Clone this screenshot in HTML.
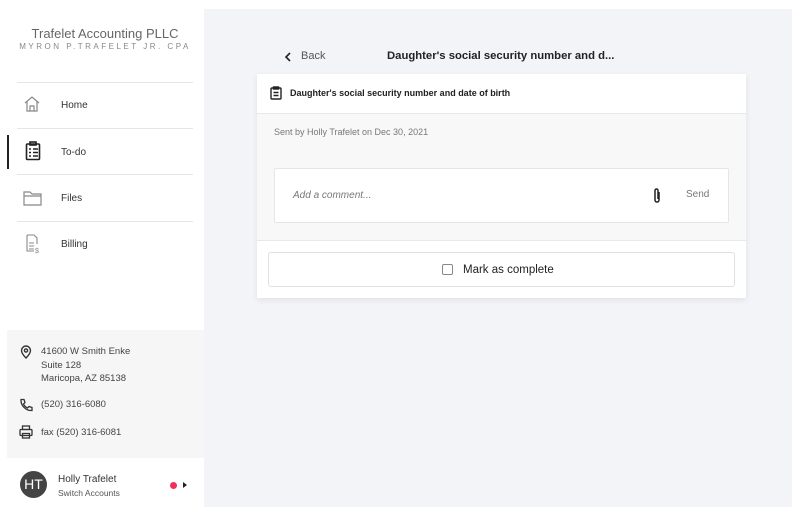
<!DOCTYPE html>
<html><head><meta charset="utf-8"><style>
*{margin:0;padding:0;box-sizing:border-box}
body{width:800px;height:516px;background:#fff;font-family:"Liberation Sans",sans-serif;position:relative;overflow:hidden;color:#222}
.main{position:absolute;left:204px;top:9px;width:588px;height:498px;background:#f3f4f7}
.side{position:absolute;left:0;top:0;width:204px;height:516px;background:#fff}
.t1{position:absolute;left:0;width:210px;top:26px;text-align:center;font-size:13px;color:#666}
.t2{position:absolute;left:0;width:210px;top:42px;text-align:center;font-size:8px;letter-spacing:2.5px;color:#888}
.hr{position:absolute;left:17px;width:176px;height:1px;background:#e5e5e5}
.nav{position:absolute;left:61px;font-size:10px;color:#333}
.ic{position:absolute;left:22px}
.info{position:absolute;left:7px;top:330px;width:197px;height:128px;background:#f6f6f7;font-size:9.5px;color:#444}
.info div{position:absolute;left:34px;line-height:13.5px}
.card{position:absolute;left:257px;top:74px;width:489px;height:224px;background:#fff;box-shadow:0 2px 6px rgba(0,0,0,.08)}
</style></head><body>
<div class="main"></div>
<div class="side">
<div class="t1">Trafelet Accounting PLLC</div>
<div class="t2">MYRON P.TRAFELET JR. CPA</div>
<div class="hr" style="top:82px"></div>
<div class="hr" style="top:128px"></div>
<div class="hr" style="top:174px"></div>
<div class="hr" style="top:221px"></div>
<svg class="ic" style="top:94px" width="20" height="20" viewBox="0 0 20 20" fill="none" stroke="#888" stroke-width="1.2"><path d="M3 9L10 3l7 6M5 8v9h10V8M8 17v-5h4v5"/></svg>
<div class="nav" style="top:100px">Home</div>
<div style="position:absolute;left:7px;top:135px;width:2px;height:34px;background:#222"></div>
<svg class="ic" style="top:141px;left:25px" width="16" height="20" viewBox="0 0 16 20" fill="none" stroke="#222" stroke-width="1.6"><rect x="1.5" y="3" width="13" height="15.5" rx="1"/><rect x="5" y="1" width="6" height="3"/><path d="M4 8h2M8 8h5M4 11.5h2M8 11.5h5M4 15h2M8 15h5"/></svg>
<div class="nav" style="top:147px">To-do</div>
<svg class="ic" style="top:188px" width="22" height="20" viewBox="0 0 22 20" fill="none" stroke="#888" stroke-width="1.2"><path d="M2 4h6l2 2h9v11H2z M2 8h17"/></svg>
<div class="nav" style="top:193px">Files</div>
<svg class="ic" style="top:234px;left:25px" width="16" height="20" viewBox="0 0 16 20" fill="none" stroke="#888" stroke-width="1.1"><path d="M2 1h7l3 3v6M2 1v16h7"/><path d="M4 9h5M4 12h5M4 15h5"/><text x="10" y="19" font-size="7" fill="#888" stroke="none">$</text></svg>
<div class="nav" style="top:239px">Billing</div>
<div class="info">
<svg style="position:absolute;left:13px;top:15px" width="12" height="14" viewBox="0 0 12 14" fill="none" stroke="#333" stroke-width="1.4"><path d="M6 13S1.5 8.5 1.5 5.5a4.5 4.5 0 019 0C10.5 8.5 6 13 6 13z"/><circle cx="6" cy="5.5" r="1.6"/></svg>
<div style="top:15px">41600 W Smith Enke<br>Suite 128<br>Maricopa, AZ 85138</div>
<svg style="position:absolute;left:12px;top:68px" width="14" height="14" viewBox="0 0 14 14" fill="none" stroke="#333" stroke-width="1.3"><path d="M2 1.5l3 0 1 3-1.5 1.5a8 8 0 004 4L10 8.5l3 1v3c-6 .5-11.5-5-11-11z"/></svg>
<div style="top:68px">(520) 316-6080</div>
<svg style="position:absolute;left:12px;top:95px" width="14" height="14" viewBox="0 0 14 14" fill="none" stroke="#333" stroke-width="1.3"><rect x="3.5" y="1" width="7" height="3.5"/><rect x="1" y="4.5" width="12" height="6" rx="1"/><rect x="3.5" y="8.5" width="7" height="4.5"/></svg>
<div style="top:96px">fax (520) 316-6081</div>
</div>
<div style="position:absolute;left:20px;top:471px;width:27px;height:27px;border-radius:50%;background:#444;color:#fff;font-size:14px;text-align:center;line-height:27px">HT</div>
<div style="position:absolute;left:58px;top:474px;font-size:10px;color:#333">Holly Trafelet</div>
<div style="position:absolute;left:58px;top:488px;font-size:8.5px;color:#555">Switch Accounts</div>
<div style="position:absolute;left:170px;top:482px;width:7px;height:7px;border-radius:50%;background:#f0305a"></div>
<div style="position:absolute;left:183px;top:482px;width:0;height:0;border-left:4px solid #222;border-top:3px solid transparent;border-bottom:3px solid transparent"></div>
</div>
<svg style="position:absolute;left:284px;top:52px" width="8" height="10" viewBox="0 0 8 10" fill="none" stroke="#222" stroke-width="1.6"><path d="M6 1L2 5l4 4"/></svg>
<div style="position:absolute;left:301px;top:50px;font-size:11px;color:#555">Back</div>
<div style="position:absolute;left:387px;top:50px;font-size:11.3px;font-weight:bold;color:#222">Daughter's social security number and d...</div>
<div class="card">
<svg style="position:absolute;left:13px;top:12px" width="12" height="14" viewBox="0 0 12 14" fill="none" stroke="#222" stroke-width="1.4"><rect x="1" y="2" width="10" height="11" rx="1"/><rect x="3.5" y="1" width="5" height="2" fill="#222"/><path d="M3.5 6.5h5M3.5 9.5h5"/></svg>
<div style="position:absolute;left:33px;top:14px;font-size:9px;font-weight:bold;color:#222">Daughter's social security number and date of birth</div>
<div style="position:absolute;left:0;top:39px;width:489px;height:128px;background:#f8f8f9;border-top:1px solid #e8e8e8;border-bottom:1px solid #e8e8e8"></div>
<div style="position:absolute;left:17px;top:53px;font-size:9px;color:#777">Sent by Holly Trafelet on Dec 30, 2021</div>
<div style="position:absolute;left:17px;top:94px;width:455px;height:55px;background:#fff;border:1px solid #e6e6e6;border-radius:2px">
<div style="position:absolute;left:18px;top:21px;font-size:10px;font-style:italic;color:#777">Add a comment...</div>
<svg style="position:absolute;left:377px;top:18px" width="10" height="18" viewBox="0 0 10 18" fill="none" stroke="#222" stroke-width="1.5"><path d="M7 5v8a2 2 0 01-4 0V3.5a1.5 1.5 0 013 0V12"/></svg>
<div style="position:absolute;left:411px;top:20px;font-size:10px;color:#777">Send</div>
</div>
<div style="position:absolute;left:11px;top:178px;width:467px;height:35px;border:1px solid #e0e0e0;border-radius:3px;background:#fff">
<div style="position:absolute;left:173px;top:11px;width:11px;height:11px;border:1.3px solid #888;border-radius:2px"></div>
<div style="position:absolute;left:194px;top:11px;font-size:11.5px;color:#222">Mark as complete</div>
</div>
</div>
</body></html>
